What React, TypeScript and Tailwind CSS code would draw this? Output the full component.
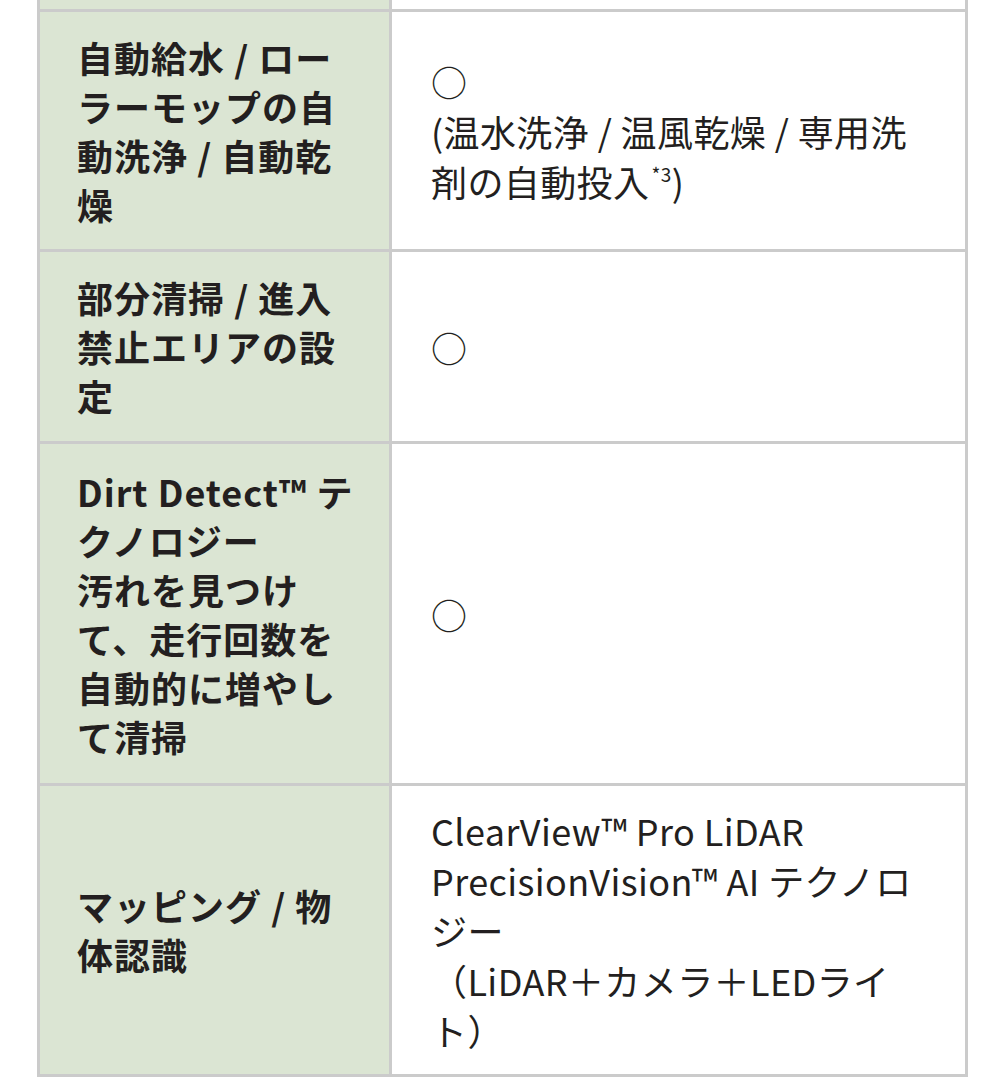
import React from "react";

type Row = {
  label: React.ReactNode;
  value: React.ReactNode;
  height: string;
};

// heights include the 3px top border of each row
const rows: Row[] = [
  {
    height: "h-[240px]",
    label: (
      <>
        自動給水 / ロー
        <br />
        ラーモップの自
        <br />
        動洗浄 / 自動乾
        <br />燥
      </>
    ),
    value: (
      <>
        ○
        <br />
        (温水洗浄 / 温風乾燥 / 専用洗
        <br />
        剤の自動投入
        <span className="inline-block text-[19px] leading-none relative -top-[15px] ml-[2px]">
          *3
        </span>
        )
      </>
    ),
  },
  {
    height: "h-[192px]",
    label: (
      <>
        部分清掃 / 進入
        <br />
        禁止エリアの設
        <br />定
      </>
    ),
    value: <>○</>,
  },
  {
    height: "h-[342px]",
    label: (
      <>
        Dirt Detect™ テ
        <br />
        クノロジー
        <br />
        汚れを見つけ
        <br />
        て、走行回数を
        <br />
        自動的に増やし
        <br />
        て清掃
      </>
    ),
    value: <>○</>,
  },
  {
    height: "h-[291px]",
    label: (
      <>
        マッピング / 物
        <br />
        体認識
      </>
    ),
    value: (
      <>
        ClearView™ Pro LiDAR
        <br />
        PrecisionVision™ AI テクノロ
        <br />
        ジー
        <br />
        （LiDAR＋カメラ＋LEDライ
        <br />
        ト）
      </>
    ),
  },
];

export default function App() {
  return (
    <div className="w-[1005px] h-[1080px] overflow-hidden bg-white font-['Noto_Sans_CJK_JP','Noto_Sans',sans-serif] text-[#231f20]">
      <div className="ml-[37px] w-[931px] border-x-[3px] border-b-[3px] border-[#cbcbcb]">
        {/* tail of the row above, cut off by the screen */}
        <div className="grid grid-cols-[352px_573px] h-[9px]">
          <div className="bg-[#dbe5d3] border-r-[3px] border-[#cbcbcb]" />
          <div className="bg-white" />
        </div>

        {rows.map((r, i) => (
          <div
            key={i}
            className={`grid grid-cols-[352px_573px] border-t-[3px] border-[#cbcbcb] ${r.height}`}
          >
            <div className="bg-[#dbe5d3] border-r-[3px] border-[#cbcbcb] flex items-center pl-[37px] pr-[20px]">
              <p className="text-[36px] leading-[49px] font-bold tracking-[1px] whitespace-nowrap">
                {r.label}
              </p>
            </div>
            <div className="bg-white flex items-center pl-[39px] pr-[20px]">
              <p className="text-[36px] leading-[50px] font-normal tracking-[0.4px] whitespace-nowrap">
                {r.value}
              </p>
            </div>
          </div>
        ))}
      </div>
    </div>
  );
}
